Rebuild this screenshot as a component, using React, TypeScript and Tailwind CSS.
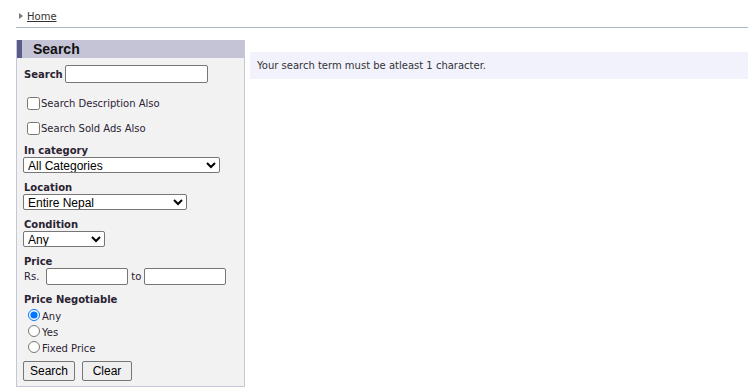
import React from "react";

const sans = { fontFamily: '"DejaVu Sans", Verdana, sans-serif' };

function Label({ children }: { children: React.ReactNode }) {
  return <div className="h-[12px] text-[10px] font-bold leading-[12px] text-[#2b2233]">{children}</div>;
}

function Select({ width, value }: { width: string; value: string }) {
  return (
    <select
      defaultValue={value}
      className={`${width} -ml-px block h-[16px] rounded-[2px] border border-[#767676] bg-white px-0 font-['Liberation_Sans',Arial,sans-serif] text-[12px] leading-[14px] text-black`}
    >
      <option>{value}</option>
    </select>
  );
}

function Radio({ label, checked }: { label: string; checked?: boolean }) {
  return (
    <label className="flex h-[16px] items-center">
      <input type="radio" name="neg" defaultChecked={checked} className="m-0 ml-[4px] h-[12px] w-[12px]" />
      <span className="ml-[2px] mt-[3px] text-[10px] text-[#2b2233]">{label}</span>
    </label>
  );
}

export default function App() {
  return (
    <div className="h-[387px] w-[748px] overflow-hidden bg-white text-[#333]" style={sans}>
      <div className="flex h-[27px] items-center pl-[19px] pt-[5px] text-[10px]">
        <svg width="4" height="6" viewBox="0 0 4 6" className="mr-[4px]">
          <path d="M0 0 L4 3 L0 6 Z" fill="#777" />
        </svg>
        <a href="#" className="text-[#333] underline">
          Home
        </a>
      </div>
      <div className="ml-[16px] h-px bg-[#a9b8cc]" />

      <div className="mt-[12px] flex items-start gap-[5px] pl-[16px]">
        <div className="w-[229px] border border-t-0 border-[#c6c6d8] bg-[#f2f2f2]">
          <div className="flex h-[18px] items-center bg-[#c4c4d6]">
            <div className="h-full w-[5px] bg-[#5b5b8a]" />
            <span className="ml-[11px] font-['Liberation_Sans',Arial,sans-serif] text-[14px] font-bold text-[#111]">
              Search
            </span>
          </div>

          <div className="flex flex-col pl-[7px] pb-[5px]">
            <div className="mt-[7px] flex h-[18px] items-center">
              <span className="text-[10px] font-bold text-[#2b2233]">Search</span>
              <input type="text" className="ml-[2px] h-[18px] w-[143px] rounded-[2px] border border-[#767676] bg-white" />
            </div>

            <label className="mt-[12px] flex h-[16px] items-center">
              <input type="checkbox" className="m-0 ml-[3px] h-[13px] w-[13px]" />
              <span className="ml-[1px] text-[10px] text-[#2b2233]">Search Description Also</span>
            </label>
            <label className="mt-[9px] flex h-[16px] items-center">
              <input type="checkbox" className="m-0 ml-[3px] h-[13px] w-[13px]" />
              <span className="ml-[1px] text-[10px] text-[#2b2233]">Search Sold Ads Also</span>
            </label>

            <div className="mt-[9px]">
              <Label>In category</Label>
              <Select width="w-[197px]" value="All Categories" />
            </div>
            <div className="mt-[9px]">
              <Label>Location</Label>
              <Select width="w-[164px]" value="Entire Nepal" />
            </div>
            <div className="mt-[9px]">
              <Label>Condition</Label>
              <Select width="w-[82px]" value="Any" />
            </div>

            <div className="mt-[9px]">
              <Label>Price</Label>
              <div className="flex h-[17px] items-center text-[10px] text-[#2b2233]">
                <span>Rs.</span>
                <input type="text" className="ml-[7px] h-[17px] w-[82px] rounded-[2px] border border-[#767676] bg-white" />
                <span className="ml-[3px]">to</span>
                <input type="text" className="ml-[3px] h-[17px] w-[82px] rounded-[2px] border border-[#767676] bg-white" />
              </div>
            </div>

            <div className="mt-[9px]">
              <Label>Price Negotiable</Label>
              <div className="mt-[1px] flex flex-col">
                <Radio label="Any" checked />
                <Radio label="Yes" />
                <Radio label="Fixed Price" />
              </div>
            </div>

            <div className="mt-[6px] flex gap-[7px] font-['Liberation_Sans',Arial,sans-serif] text-[12px] text-black">
              <button className="-ml-px h-[20px] w-[52px] rounded-[2px] border border-[#767676] bg-[#efefef]">Search</button>
              <button className="h-[20px] w-[50px] rounded-[2px] border border-[#767676] bg-[#efefef]">Clear</button>
            </div>
          </div>
        </div>

        <div className="mt-[12px] flex h-[27px] flex-1 items-center bg-[#f2f2fc] pl-[7px] text-[10px] text-[#333]">
          Your search term must be atleast 1 character.
        </div>
      </div>
    </div>
  );
}
